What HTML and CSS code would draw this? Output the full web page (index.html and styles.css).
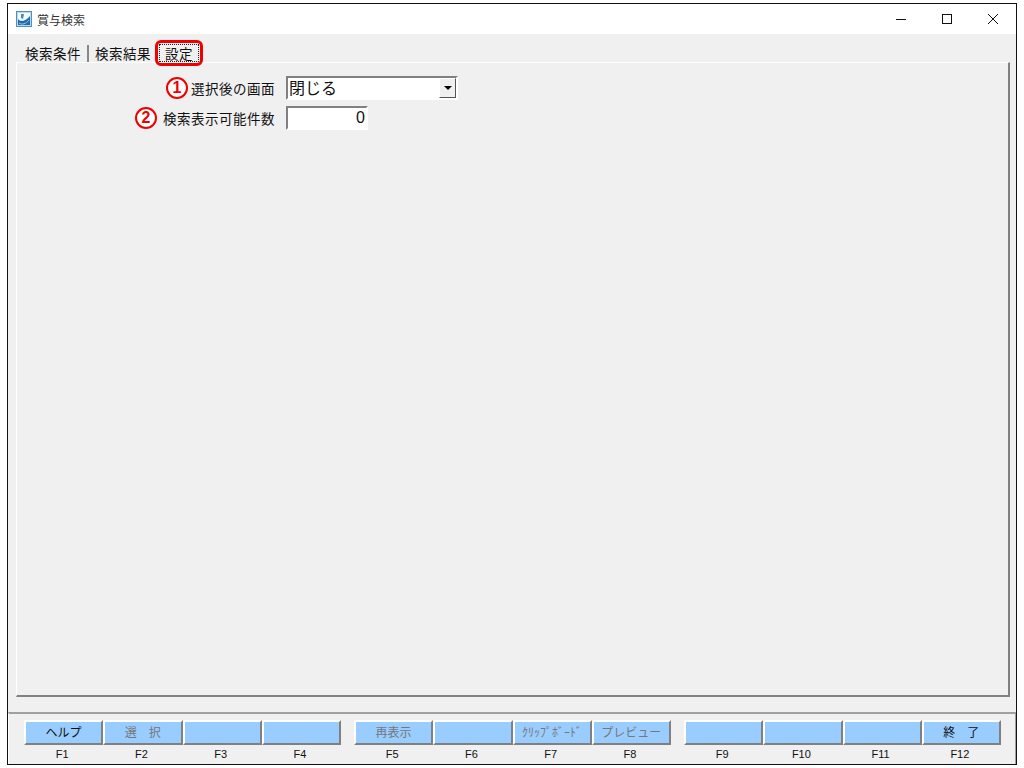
FILE: index.html
```html
<!DOCTYPE html>
<html lang="ja">
<head>
    <meta charset="UTF-8">
    <title>賞与検索</title>
    <link rel="stylesheet" href="styles.css">
</head>
<body>

<div class="window">
    <div class="titlebar">
        <svg class="app-icon" width="16" height="16" viewBox="0 0 16 16">
            <rect x="0.5" y="0.5" width="15" height="15" fill="#bcd9f0" stroke="#4f8fc4"/>
            <rect x="2" y="2" width="12" height="12" fill="#f6fafd"/>
            <path d="M2 8 C4 11 9 11 14 5 V14 H2 Z" fill="#1b6cb4"/>
            <path d="M3 12 C6 14 10 13 13 9" stroke="#9cc8ea" fill="none"/>
            <path d="M5 3 H8 L7 8 L5 7 Z" fill="#3f8ccb"/>
        </svg>
        <span class="title-text">賞与検索</span>
        <div class="window-buttons">
            <svg class="win-btn" width="46" height="30" viewBox="0 0 46 30"><path d="M18 15.5 H28" stroke="#111" fill="none"/></svg>
            <svg class="win-btn" width="46" height="30" viewBox="0 0 46 30"><rect x="18.5" y="10.5" width="9" height="9" stroke="#111" fill="none"/></svg>
            <svg class="win-btn" width="46" height="30" viewBox="0 0 46 30"><path d="M18 10 L28 20 M28 10 L18 20" stroke="#111" fill="none"/></svg>
        </div>
    </div>

    <div class="client">
        <div class="tabs">
            <div class="tab">検索条件</div>
            <div class="tab-sep"></div>
            <div class="tab">検索結果</div>
            <div class="tab tab-active"><span class="tab-focus">設定</span></div>
        </div>

        <div class="panel">
            <div class="form-row">
                <div class="form-label"><span class="marker">1</span>選択後の画面</div>
                <div class="combo">
                    <span class="combo-text">閉じる</span>
                    <span class="combo-btn"><span class="combo-arrow"></span></span>
                </div>
            </div>
            <div class="form-row">
                <div class="form-label"><span class="marker marker-wide">2</span>検索表示可能件数</div>
                <div class="num-input">0</div>
            </div>
        </div>

        <div class="fkeys">
            <div class="fkey-group">
                <div class="fkey"><div class="fbtn">ヘルプ</div><div class="flabel">F1</div></div>
                <div class="fkey"><div class="fbtn fbtn-off">選　択</div><div class="flabel">F2</div></div>
                <div class="fkey"><div class="fbtn"></div><div class="flabel">F3</div></div>
                <div class="fkey"><div class="fbtn"></div><div class="flabel">F4</div></div>
            </div>
            <div class="fkey-group">
                <div class="fkey"><div class="fbtn fbtn-off">再表示</div><div class="flabel">F5</div></div>
                <div class="fkey"><div class="fbtn"></div><div class="flabel">F6</div></div>
                <div class="fkey"><div class="fbtn fbtn-off">ｸﾘｯﾌﾟﾎﾞｰﾄﾞ</div><div class="flabel">F7</div></div>
                <div class="fkey"><div class="fbtn fbtn-off">プレビュー</div><div class="flabel">F8</div></div>
            </div>
            <div class="fkey-group">
                <div class="fkey"><div class="fbtn"></div><div class="flabel">F9</div></div>
                <div class="fkey"><div class="fbtn"></div><div class="flabel">F10</div></div>
                <div class="fkey"><div class="fbtn"></div><div class="flabel">F11</div></div>
                <div class="fkey"><div class="fbtn">終　了</div><div class="flabel">F12</div></div>
            </div>
        </div>
    </div>
</div>

</body>
</html>
```

FILE: styles.css
```css
body {
    margin: 0;
    background-color: #fff;
    font-family: "Noto Sans CJK JP", "Liberation Sans", sans-serif;
    color: #111;
}

.window {
    box-sizing: border-box;
    width: 1010px;
    height: 762px;
    margin: 3px 7px;
    border: 1px solid #111;
    display: flex;
    flex-direction: column;
}

/* タイトルバー */
.titlebar {
    height: 30px;
    flex-shrink: 0;
    background-color: #fff;
    display: flex;
    align-items: center;
    padding-left: 8px;
}

.app-icon {
    margin-right: 5px;
}

.title-text {
    font-size: 12px;
    color: #333;
}

.window-buttons {
    margin-left: auto;
    display: flex;
}

.win-btn {
    display: block;
}

.client {
    flex: 1;
    background-color: #f0f0f0;
    display: flex;
    flex-direction: column;
}

/* タブ */
.tabs {
    box-sizing: border-box;
    height: 28px;
    padding: 10px 0 0 11px;
    display: flex;
    align-items: center;
    font-size: 13.5px;
    letter-spacing: 0.5px;
    flex-shrink: 0;
}

.tab {
    padding: 0 6px;
    white-space: nowrap;
}

.tab-sep {
    width: 2px;
    height: 17px;
    background-color: #888;
}

.tab-active {
    position: relative;
    margin-left: -3px;
    padding: 0 6px 0 5px;
}

.tab-focus {
    display: block;
    border: 1px dotted #222;
    padding: 0 5px;
    line-height: 16px;
}

.tab-active::after {
    content: "";
    position: absolute;
    left: 1px;
    top: -4px;
    width: 42px;
    height: 20px;
    border: 3px solid #f00000;
    border-radius: 6px;
}

/* 設定パネル */
.panel {
    box-sizing: border-box;
    height: 635px;
    margin: 0 6px 0 8px;
    border-top: 1px solid #fff;
    border-left: 1px solid #fff;
    border-right: 2px solid #808080;
    border-bottom: 2px solid #808080;
    padding-top: 10px;
    flex-shrink: 0;
}

.form-row {
    display: flex;
    align-items: center;
    height: 30px;
}

.form-label {
    box-sizing: border-box;
    width: 269px;
    padding-right: 11px;
    display: flex;
    justify-content: flex-end;
    align-items: center;
    font-size: 13.5px;
    letter-spacing: 0.5px;
    white-space: nowrap;
}

.marker {
    box-sizing: border-box;
    width: 22px;
    height: 22px;
    margin-right: 3px;
    border: 2px solid #f00000;
    border-radius: 50%;
    color: #f00000;
    background-color: #fff;
    font-family: "Liberation Sans", sans-serif;
    font-size: 16px;
    font-weight: bold;
    letter-spacing: 0;
    line-height: 18px;
    text-align: center;
}

.marker-wide {
    margin-right: 6px;
}

.combo {
    box-sizing: border-box;
    width: 172px;
    height: 24px;
    background-color: #fff;
    border: 2px solid;
    border-color: #808080 #fff #fff #808080;
    display: flex;
    justify-content: space-between;
    font-size: 16px;
    line-height: 18px;
    padding-left: 1px;
}

.combo-btn {
    box-sizing: border-box;
    width: 17px;
    height: 20px;
    background-color: #f0f0f0;
    border: 1px solid;
    border-color: #fff #555 #555 #fff;
    display: flex;
    align-items: center;
    justify-content: center;
}

.combo-arrow {
    width: 0;
    height: 0;
    border-left: 4px solid transparent;
    border-right: 4px solid transparent;
    border-top: 4px solid #000;
}

.num-input {
    box-sizing: border-box;
    width: 82px;
    height: 24px;
    background-color: #fff;
    border: 2px solid;
    border-color: #808080 #fff #fff #808080;
    font-family: "Liberation Sans", sans-serif;
    font-size: 16px;
    line-height: 20px;
    text-align: right;
    padding-right: 1px;
}

/* ファンクションキー */
.fkeys {
    flex: 1;
    margin-top: 15px;
    border-top: 2px solid #a0a0a0;
    border-left: 1px solid #fff;
    border-right: 1px solid #a0a0a0;
    padding: 6px 14px 0 15px;
    display: flex;
    justify-content: space-between;
}

.fkey-group {
    display: flex;
}

.fkey {
    width: 79.25px;
}

.fbtn {
    box-sizing: border-box;
    height: 25px;
    background-color: #99ccff;
    border: 2px solid;
    border-color: #fff #808080 #808080 #fff;
    font-size: 12px;
    line-height: 19px;
    text-align: center;
    white-space: nowrap;
    overflow: hidden;
}

.fbtn-off {
    color: #777;
}

.flabel {
    font-family: "Liberation Sans", sans-serif;
    font-size: 11px;
    line-height: 14px;
    margin-top: 2px;
    padding-right: 3px;
    text-align: center;
}
```
